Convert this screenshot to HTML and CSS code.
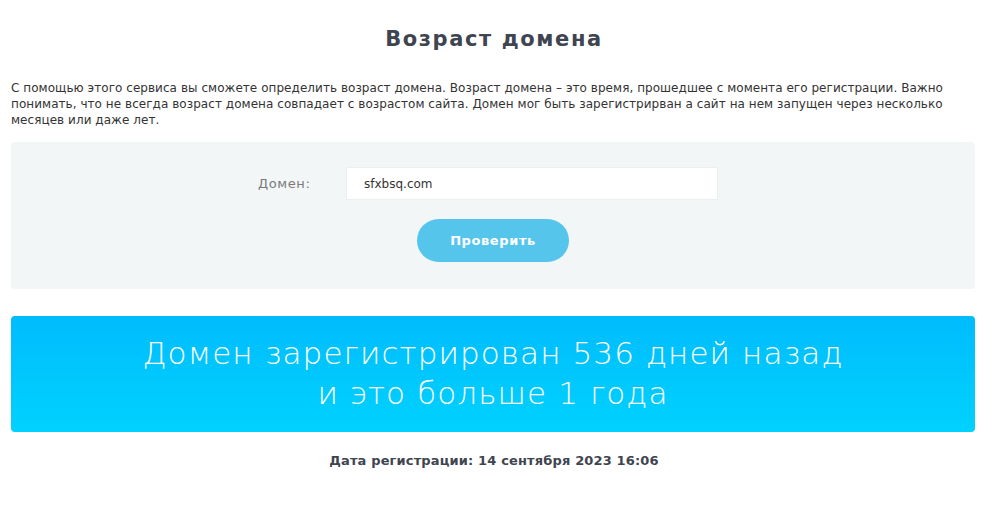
FILE: index.html
```html
<!DOCTYPE html>
<html lang="ru">
<head>
<meta charset="utf-8">
<link rel="stylesheet" href="styles.css">
</head>
<body>
<div class="page">
  <h1 class="title">Возраст домена</h1>
  <p class="intro">С помощью этого сервиса вы сможете определить возраст домена. Возраст домена – это время, прошедшее с момента его регистрации. Важно понимать, что не всегда возраст домена совпадает с возрастом сайта. Домен мог быть зарегистрирван а сайт на нем запущен через несколько месяцев или даже лет.</p>
  <div class="form-box">
    <div class="form-row">
      <label class="label">Домен:</label>
      <div class="input">sfxbsq.com</div>
    </div>
    <div class="btn-row"><button class="btn">Проверить</button></div>
  </div>
  <div class="result">
    <div class="result-line">Домен зарегистрирован 536 дней назад</div>
    <div class="result-line">и это больше 1 года</div>
  </div>
  <div class="date">Дата регистрации: 14 сентября 2023 16:06</div>
</div>
</body>
</html>
```

FILE: styles.css
```css
html, body { margin: 0; padding: 0; background: #fff; }
body { font-family: "DejaVu Sans", "Open Sans", sans-serif; color: #333; }
.page { width: 964px; margin-left: 11px; padding-top: 26px; }
.title { margin: 0; text-align: center; font-size: 21px; letter-spacing: 1.6px; font-weight: bold; color: #3f4550; line-height: 26px; padding-left: 2px; }
.intro { margin: 28px 0 0; font-size: 12px; letter-spacing: 0.05px; line-height: 16px; color: #333; }
.form-box { margin-top: 14px; background: #f3f6f7; border-radius: 4px; height: 147px; box-sizing: border-box; padding-top: 25px; }
.form-row { display: flex; align-items: center; }
.label { width: 299px; padding-left: 247px; box-sizing: border-box; font-size: 13px; letter-spacing: 0.6px; color: #7a7a7a; }
.input { margin-left: 36px; width: 372px; height: 33px; box-sizing: border-box; background: #fff; border: 1px solid #eceff1; padding-left: 17px; display: flex; align-items: center; font-size: 12px; color: #333; }
.btn-row { display: flex; margin-top: 19px; padding-left: 406px; }
.btn { width: 152px; height: 43px; border: none; border-radius: 22px; background: #56c5ec; color: #fff; font-family: "DejaVu Sans", sans-serif; font-weight: bold; font-size: 13px; letter-spacing: 0.6px; padding: 0; }
.result { margin-top: 27px; height: 116px; border-radius: 4px; background: linear-gradient(180deg, #00bcfd 0%, #00d2fe 100%); color: #fff; text-align: center; font-size: 31px; font-weight: 200; letter-spacing: 1.1px; line-height: 40px; padding-top: 17px; box-sizing: border-box; font-family: "DejaVu Sans", sans-serif; }
.date { margin-top: 21px; text-align: center; font-size: 13px; letter-spacing: 0.15px; font-weight: bold; color: #3f4550; padding-left: 2px; }
```
